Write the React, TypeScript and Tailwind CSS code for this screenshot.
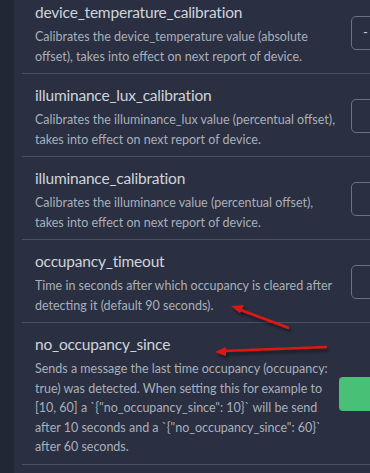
import React from "react";

type Setting = {
  name: string;
  lines: string[];
  control: "input" | "button";
  value?: string;
};

const settings: Setting[] = [
  {
    name: "device_temperature_calibration",
    lines: [
      "Calibrates the device_temperature value (absolute",
      "offset), takes into effect on next report of device.",
    ],
    control: "input",
    value: "-",
  },
  {
    name: "illuminance_lux_calibration",
    lines: [
      "Calibrates the illuminance_lux value (percentual offset),",
      "takes into effect on next report of device.",
    ],
    control: "input",
  },
  {
    name: "illuminance_calibration",
    lines: [
      "Calibrates the illuminance value (percentual offset),",
      "takes into effect on next report of device.",
    ],
    control: "input",
  },
  {
    name: "occupancy_timeout",
    lines: [
      "Time in seconds after which occupancy is cleared after",
      "detecting it (default 90 seconds).",
    ],
    control: "input",
  },
  {
    name: "no_occupancy_since",
    lines: [
      "Sends a message the last time occupancy (occupancy:",
      "true) was detected. When setting this for example to",
      '[10, 60] a `{"no_occupancy_since": 10}` will be send',
      'after 10 seconds and a `{"no_occupancy_since": 60}`',
      "after 60 seconds.",
    ],
    control: "button",
  },
];

const SettingRow: React.FC<{ setting: Setting }> = ({ setting }) => {
  return (
    <div className="flex items-center border-b border-[#4a5061] pl-[13px] pt-[9px] pb-[7px]">
      {/* texto */}
      <div className="w-[304px] shrink-0">
        <div className="text-[15.5px] leading-[24px] tracking-[-0.2px] text-[#d0d4db]">{setting.name}</div>
        <div className="mt-[3px] text-[12.5px] leading-[19.5px] text-[#a9afbb]">
          {setting.lines.map((l, i) => (
            <div key={i} className="whitespace-nowrap">
              {l}
            </div>
          ))}
        </div>
      </div>
      {setting.control === "input" ? (
        <div className="ml-[12px] w-[120px] h-[34px] shrink-0 rounded-[5px] border border-[#6b7282] flex items-center pl-[11px] text-[13px] text-[#c9ced6]">
          {setting.value}
        </div>
      ) : (
        <div className="w-[100px] h-[34px] shrink-0 rounded-[4px] bg-[#48c076]" />
      )}
    </div>
  );
};

export default function App() {
  return (
    <div
      className="relative w-[370px] h-[473px] overflow-hidden flex bg-[#2a3041]"
      style={{ fontFamily: 'Lato, "Noto Sans", sans-serif' }}
    >
      <div className="w-[14px] shrink-0 bg-[#222736]" />
      <div className="flex-1 min-w-0 pl-[8px] -mt-[9px]">
        {settings.map((s) => (
          <SettingRow key={s.name} setting={s} />
        ))}
      </div>

      {/* flechas rojas */}
      <svg className="absolute inset-0 pointer-events-none" width="370" height="473">
        <defs>
          <filter id="sh" x="-20%" y="-50%" width="140%" height="200%">
            <feDropShadow dx="2" dy="3" stdDeviation="1.5" floodColor="#000" floodOpacity="0.45" />
          </filter>
        </defs>
        <g filter="url(#sh)" fill="#e01515" stroke="#e01515">
          <line x1="289" y1="328" x2="238" y2="309" strokeWidth="2.5" />
          <polygon points="231,306 244,305 240,313" stroke="none" />
          <line x1="327" y1="347" x2="222" y2="351" strokeWidth="2.5" />
          <polygon points="215,352 226,347 226,356" stroke="none" />
        </g>
      </svg>
    </div>
  );
}
